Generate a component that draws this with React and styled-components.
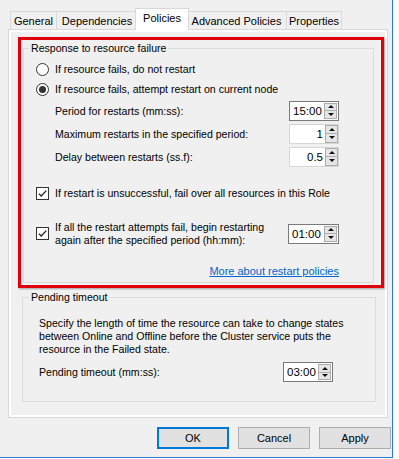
import React from 'react';
import styled, { createGlobalStyle } from 'styled-components';

const Global = createGlobalStyle`
  html, body { margin: 0; padding: 0; background: #ffffff; }
  body {
    font-family: "Liberation Sans", Arial, sans-serif;
    font-size: 10.6px;
    color: #000;
  }
  * { box-sizing: border-box; }
`;

const Window = styled.div`
  width: 393px;
  height: 458px;
  background: #f0f0f0;
  border-right: 1px solid #2b79d0;
  border-bottom: 1px solid #2b79d0;
  padding: 8px 0 0 8px;
  display: flex;
  flex-direction: column;
`;

const TabRow = styled.div`
  display: flex;
  align-items: flex-end;
  height: 21px;
  padding-left: 2px;
  position: relative;
  z-index: 2;
  font-size: 11px;
`;

const Tab = styled.div`
  width: ${p => p.$w}px;
  height: ${p => (p.$active ? 22 : 18)}px;
  margin-left: ${p => (p.$first ? 0 : p.$active ? -3 : -1)}px;
  margin-right: ${p => (p.$active ? -2 : 0)}px;
  margin-bottom: ${p => (p.$active ? -1 : 0)}px;
  background: ${p => (p.$active ? '#ffffff' : '#f0f0f0')};
  border: 1px solid #d9d9d9;
  border-bottom: none;
  display: flex;
  align-items: center;
  justify-content: center;
  padding-bottom: ${p => (p.$active ? 3 : 0)}px;
  position: relative;
  z-index: ${p => (p.$active ? 2 : 1)};
  white-space: nowrap;
`;

const Panel = styled.div`
  width: 380px;
  height: 389px;
  border: 1px solid #d9d9d9;
  background: #ffffff;
  padding: 2px;
  display: flex;
`;

const Page = styled.div`
  flex: 1;
  background: #f0f0f0;
  display: flex;
  flex-direction: column;
  padding: 5px 0 0 7px;
`;

const RedFrame = styled.div`
  width: 366px;
  border: 3px solid #e0000b;
  padding: 0 7px 2px 2px;
  box-shadow: 1px 1px 2px rgba(0, 0, 0, 0.35);
`;

const GroupBox = styled.div`
  position: relative;
  border: 1px solid #dcdcdc;
  width: ${p => p.$w}px;
  margin: ${p => p.$margin};
  padding: ${p => p.$pad};
  display: flex;
  flex-direction: column;
`;

const Legend = styled.span`
  position: absolute;
  top: -8px;
  left: ${p => p.$left}px;
  padding: 0 2px;
  line-height: 15px;
  background: #f0f0f0;
  white-space: nowrap;
`;

const OptionRow = styled.label`
  display: flex;
  align-items: center;
  gap: 6px;
  height: ${p => p.$h || 20}px;
  margin-top: ${p => p.$mt || 0}px;
  white-space: nowrap;
`;

const Radio = styled.span`
  width: 13px;
  height: 13px;
  border-radius: 50%;
  border: 1px solid #333;
  background: #fff;
  display: flex;
  align-items: center;
  justify-content: center;
  flex-shrink: 0;
  &::after {
    content: '';
    display: ${p => (p.$checked ? 'block' : 'none')};
    width: 7px;
    height: 7px;
    border-radius: 50%;
    background: #333;
  }
`;

const CheckBox = styled.span`
  width: 13px;
  height: 13px;
  border: 1px solid #333;
  background: #fff;
  display: flex;
  align-items: center;
  justify-content: center;
  flex-shrink: 0;
`;

const SpinRow = styled.div`
  display: flex;
  align-items: center;
  justify-content: space-between;
  height: ${p => p.$h || 23}px;
  padding-left: ${p => p.$indent || 0}px;
  margin-top: ${p => p.$mt || 0}px;
  white-space: nowrap;
`;

const TwoLine = styled.div`
  line-height: 13px;
  white-space: nowrap;
`;

const SpinBox = styled.div`
  display: flex;
  width: ${p => p.$w || 50}px;
  height: 20px;
  background: #fff;
  border: 1px solid ${p => (p.$light ? '#d6d6d6' : '#7a7a7a')};
  padding: ${p => (p.$light ? '0' : '1px')};
  flex-shrink: 0;
`;

const SpinValue = styled.div`
  flex: 1;
  display: flex;
  align-items: center;
  justify-content: ${p => (p.$right ? 'flex-end' : 'flex-start')};
  padding: ${p => (p.$right ? '0 2px 0 0' : '0 0 0 2px')};
  font-size: 11.5px;
`;

const SpinArrows = styled.div`
  width: 13px;
  display: flex;
  flex-direction: column;
  border: 1px solid #adadad;
  background: #e5e5e5;
`;

const Arrow = styled.div`
  flex: 1;
  display: flex;
  align-items: center;
  justify-content: center;
  & + & { border-top: 1px solid #adadad; }
  &::after {
    content: '';
    width: 0;
    height: 0;
    border-left: 3px solid transparent;
    border-right: 3px solid transparent;
    ${p => (p.$down ? 'border-top: 3px solid #111;' : 'border-bottom: 3px solid #111;')}
  }
`;

const LinkRow = styled.div`
  display: flex;
  justify-content: flex-end;
  align-items: center;
  height: 16px;
  margin-top: ${p => p.$mt || 0}px;
`;

const Link = styled.a`
  color: #0066cc;
  text-decoration: underline;
  white-space: nowrap;
  cursor: pointer;
  font-size: 11px;
`;

const Para = styled.div`
  line-height: 13px;
  white-space: nowrap;
`;

const ButtonRow = styled.div`
  display: flex;
  justify-content: flex-end;
  gap: 9px;
  margin-top: 9px;
  padding-right: 1px;
`;

const Button = styled.button`
  width: 72px;
  height: 22px;
  background: #e1e1e1;
  border: 1px solid ${p => (p.$default ? '#0078d7' : '#adadad')};
  box-shadow: ${p => (p.$default ? 'inset 0 0 0 1px #0078d7' : 'none')};
  font-family: "Liberation Sans", Arial, sans-serif;
  font-size: 11px;
  color: #000;
  padding: 0;
`;

const Check = () => (
  <svg width="11" height="11" viewBox="0 0 11 11">
    <polyline points="1.8,5.6 4.2,8 9.3,2.6" fill="none" stroke="#222" strokeWidth="1.3" />
  </svg>
);

const Spin = ({ value, light, w }) => (
  <SpinBox $light={light} $w={w}>
    <SpinValue $right={light}>{value}</SpinValue>
    <SpinArrows>
      <Arrow />
      <Arrow $down />
    </SpinArrows>
  </SpinBox>
);

const tabs = [
  { label: 'General', w: 47 },
  { label: 'Dependencies', w: 82 },
  { label: 'Policies', w: 54, active: true },
  { label: 'Advanced Policies', w: 101 },
  { label: 'Properties', w: 56 },
];

export default function App() {
  return (
    <>
      <Global />
      <Window>
        <TabRow>
          {tabs.map((t, i) => (
            <Tab key={t.label} $w={t.w} $active={t.active} $first={i === 0}>
              {t.label}
            </Tab>
          ))}
        </TabRow>
        <Panel>
          <Page>
            <RedFrame>
              <GroupBox $w={351} $margin="8px 0 0 0" $pad="10px 34px 3px 12px">
                <Legend $left={5}>Response to resource failure</Legend>
                <OptionRow>
                  <Radio />
                  <span>If resource fails, do not restart</span>
                </OptionRow>
                <OptionRow>
                  <Radio $checked />
                  <span>If resource fails, attempt restart on current node</span>
                </OptionRow>
                <SpinRow $indent={19}>
                  <span>Period for restarts (mm:ss):</span>
                  <Spin value="15:00" />
                </SpinRow>
                <SpinRow $indent={19}>
                  <span>Maximum restarts in the specified period:</span>
                  <Spin value="1" light />
                </SpinRow>
                <SpinRow $indent={19}>
                  <span>Delay between restarts (ss.f):</span>
                  <Spin value="0.5" light />
                </SpinRow>
                <OptionRow $mt={15}>
                  <CheckBox><Check /></CheckBox>
                  <span>If restart is unsuccessful, fail over all resources in this Role</span>
                </OptionRow>
                <SpinRow $h={27} $mt={17}>
                  <OptionRow $h={27}>
                    <CheckBox><Check /></CheckBox>
                    <TwoLine>
                      If all the restart attempts fail, begin restarting
                      <br />
                      again after the specified period (hh:mm):
                    </TwoLine>
                  </OptionRow>
                  <Spin value="01:00" w={51} />
                </SpinRow>
                <LinkRow $mt={16}>
                  <Link>More about restart policies</Link>
                </LinkRow>
              </GroupBox>
            </RedFrame>
            <GroupBox $w={354} $margin="9px 0 0 4px" $pad="19px 42px 19px 16px">
              <Legend $left={6}>Pending timeout</Legend>
              <Para>
                Specify the length of time the resource can take to change states
                <br />
                between Online and Offline before the Cluster service puts the
                <br />
                resource in the Failed state.
              </Para>
              <SpinRow $h={20} $mt={6}>
                <span>Pending timeout (mm:ss):</span>
                <Spin value="03:00" />
              </SpinRow>
            </GroupBox>
          </Page>
        </Panel>
        <ButtonRow>
          <Button $default>OK</Button>
          <Button>Cancel</Button>
          <Button>Apply</Button>
        </ButtonRow>
      </Window>
    </>
  );
}
